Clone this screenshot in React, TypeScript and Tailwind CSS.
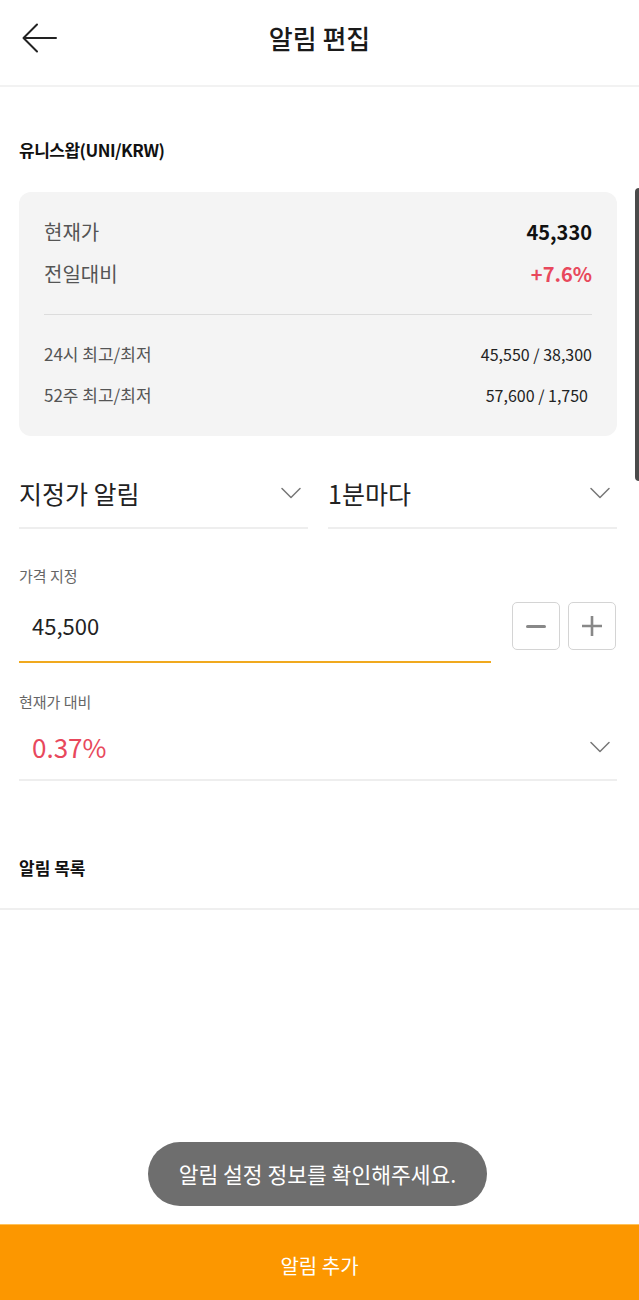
import React from "react";

const Chevron = () => (
  <svg width="20" height="12" viewBox="0 0 20 12" fill="none">
    <path d="M1 1.5 L10 10.5 L19 1.5" stroke="#777" strokeWidth="1.5" strokeLinecap="round" strokeLinejoin="round" />
  </svg>
);

export default function App() {
  return (
    <div
      className="relative flex h-[1300px] w-[639px] flex-col overflow-hidden bg-white text-[#222]"
      style={{ fontFamily: '"Noto Sans CJK KR", "Noto Sans", sans-serif' }}
    >
      {/* Header */}
      <div className="grid h-[87px] grid-cols-[1fr_auto_1fr] items-center border-b-2 border-[#f2f2f2] pb-[10px]">
        <div className="pl-[22px]">
          <svg width="35" height="30" viewBox="0 0 35 30" fill="none">
            <path d="M34 15 H2 M15 1.5 L1.5 15 L15 28.5" stroke="#222" strokeWidth="2" strokeLinecap="round" strokeLinejoin="round" />
          </svg>
        </div>
        <div className="text-[26px] font-medium leading-[34px] text-[#1a1a1a]">알림 편집</div>
        <div />
      </div>

      <div className="pl-[19px] pr-[22px]">
        <div className="pt-[51px] text-[17px] font-bold leading-[24px] tracking-[-0.5px] text-[#111]">유니스왑(UNI/KRW)</div>

        {/* Card */}
        <div className="mt-[30px] rounded-[12px] bg-[#f4f4f4] px-[25px] pt-[19px] pb-[21px]">
          <div className="flex h-[42px] items-center justify-between">
            <span className="text-[20px] text-[#555]">현재가</span>
            <span className="text-[20px] font-bold text-[#111]">45,330</span>
          </div>
          <div className="flex h-[42px] items-center justify-between">
            <span className="text-[20px] text-[#555]">전일대비</span>
            <span className="text-[20px] font-bold text-[#e8485c]">+7.6%</span>
          </div>
          <div className="mt-[19px] h-px bg-[#dcdcdc]" />
          <div className="mt-[18px] flex h-[41px] items-center justify-between">
            <span className="text-[17px] text-[#555]">24시 최고/최저</span>
            <span className="text-[16px] text-[#222]">45,550 / 38,300</span>
          </div>
          <div className="flex h-[41px] items-center justify-between">
            <span className="text-[17px] text-[#555]">52주 최고/최저</span>
            <span className="pr-[4px] text-[16px] text-[#222]">57,600 / 1,750</span>
          </div>
        </div>

        {/* Dropdowns */}
        <div className="mt-[28px] flex gap-[20px]">
          <div className="flex flex-1 items-center justify-between border-b-2 border-[#eeeeee] pt-[12px] pb-[17px] pr-[7px]">
            <span className="text-[25px] leading-[34px] text-[#222]">지정가 알림</span>
            <Chevron />
          </div>
          <div className="flex flex-1 items-center justify-between border-b-2 border-[#eeeeee] pt-[12px] pb-[17px] pr-[7px]">
            <span className="text-[25px] leading-[34px] text-[#222]">1분마다</span>
            <Chevron />
          </div>
        </div>

        {/* Price input */}
        <div className="mt-[37px] text-[15px] leading-[20px] text-[#666]">가격 지정</div>
        <div className="mt-[16px] flex items-start">
          <div className="h-[61px] flex-1 border-b-2 border-[#f0a91e] pl-[13px] pt-[8px]">
            <span className="text-[22px] leading-[30px] text-[#222]">45,500</span>
          </div>
          <div className="ml-[21px] mr-[1px] flex gap-[8px]">
            <div className="flex h-[48px] w-[48px] items-center justify-center rounded-[5px] border border-[#d4d4d4]">
              <div className="h-[3px] w-[20px] rounded bg-[#888]" />
            </div>
            <div className="flex h-[48px] w-[48px] items-center justify-center rounded-[5px] border border-[#d4d4d4]">
              <svg width="22" height="22" viewBox="0 0 22 22">
                <path d="M11 1 V21 M1 11 H21" stroke="#888" strokeWidth="2.6" />
              </svg>
            </div>
          </div>
        </div>

        {/* Compare */}
        <div className="mt-[29px] text-[15px] leading-[20px] text-[#666]">현재가 대비</div>
        <div className="mt-[18px] flex items-center justify-between border-b-2 border-[#eeeeee] pb-[15px] pl-[13px] pr-[7px]">
          <span className="text-[26px] leading-[34px] text-[#e8485c]">0.37%</span>
          <Chevron />
        </div>

        <div className="mt-[75px] pb-[28px] text-[17px] font-bold leading-[24px] text-[#111]">알림 목록</div>
      </div>
      <div className="h-[2px] bg-[#efefef]" />

      <div className="flex-1" />

      <div className="flex h-[76px] items-center justify-center border-t border-[#ffc25a] bg-[#fc9700] pt-[6px]">
        <span className="text-[20px] text-white">알림 추가</span>
      </div>

      {/* Toast */}
      <div className="absolute inset-x-0 bottom-[94px] flex justify-center pr-[4px]">
        <div className="flex h-[64px] items-center rounded-full bg-[#6e6e6e] px-[31px]">
          <span className="text-[21.5px] text-white">알림 설정 정보를 확인해주세요.</span>
        </div>
      </div>

      {/* Scrollbar */}
      <div className="absolute right-0 top-[188px] h-[293px] w-[4px] rounded-l bg-[#4a4a4a]" />
    </div>
  );
}
